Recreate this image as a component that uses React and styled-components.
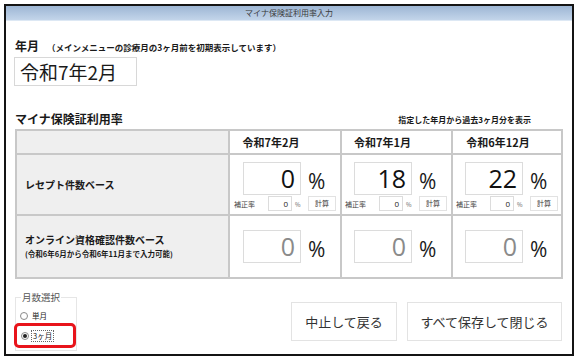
import styled, { createGlobalStyle } from 'styled-components';

const GlobalStyle = createGlobalStyle`
    html, body {
        margin: 0;
        padding: 0;
        background: #ffffff;
    }
    body {
        font-family: "Noto Sans CJK JP", "Noto Sans", sans-serif;
        color: #1a1a1a;
    }
`;

const Frame = styled.div`
    box-sizing: border-box;
    margin: 4px 0 0 4px;
    width: 570px;
    height: 352px;
    border: 2px solid #141414;
    display: flex;
    flex-direction: column;
`;

const TitleBar = styled.div`
    height: 14px;
    background: linear-gradient(#9db6d4, #c3d5ea);
    border-bottom: 1px solid #dde8f4;
    font-size: 8px;
    line-height: 14px;
    color: #3a3a3a;
    text-align: center;
`;

const Body = styled.div`
    padding: 0 9px 0 9px;
    display: flex;
    flex-direction: column;
`;

const YearLabel = styled.div`
    margin-top: 17px;
    font-size: 12px;
    font-weight: 700;
    line-height: 16px;
    display: flex;
    align-items: baseline;
`;

const Note = styled.span`
    font-size: 8.5px;
    font-weight: 700;
    margin-left: 8px;
`;

const DateBox = styled.div`
    box-sizing: border-box;
    margin: 2px 0 0 -1px;
    width: 123px;
    height: 29px;
    border: 1px solid #d8d8d8;
    font-size: 19px;
    line-height: 27px;
    padding-left: 5px;
`;

const SectionHead = styled.div`
    margin: 24px 0 3px;
    display: flex;
    justify-content: space-between;
    align-items: flex-end;
    height: 16px;
    padding-right: 32px;
`;

const SectionTitle = styled.div`
    font-size: 12px;
    font-weight: 700;
    line-height: 14px;
`;

const SectionNote = styled.div`
    font-size: 8px;
    font-weight: 700;
    line-height: 12px;
`;

const Table = styled.div`
    display: grid;
    grid-template-columns: 211px 110px 109px 108px;
    grid-template-rows: 22px 59px 61px;
    gap: 2px;
    border: 2px solid #c8c8c8;
    background: #c8c8c8;
    width: 548px;
    box-sizing: border-box;
`;

const LabelCell = styled.div`
    background: #efefef;
    padding-left: 8px;
    display: flex;
    flex-direction: column;
    justify-content: center;
    font-weight: 700;
    font-size: 10px;
    line-height: 15px;
`;

const SubLabel = styled.div`
    font-size: 7.5px;
    line-height: 14px;
`;

const HeadCell = styled.div`
    background: #ffffff;
    font-size: 11px;
    font-weight: 700;
    display: flex;
    align-items: center;
    justify-content: center;
    padding-right: ${(p) => p.shift}px;
`;

const ValueCell = styled.div`
    background: #ffffff;
    display: flex;
    flex-direction: column;
    padding: ${(p) => (p.center ? '0' : '7px')} 0 0 ${(p) => p.left}px;
    justify-content: ${(p) => (p.center ? 'center' : 'flex-start')};
`;

const ValueRow = styled.div`
    display: flex;
    align-items: center;
    margin-left: 9px;
`;

const BigInput = styled.div`
    box-sizing: border-box;
    width: 58px;
    height: 33px;
    border: 1px solid #dcdcdc;
    font-family: "Open Sans", "Noto Sans", sans-serif;
    font-size: 25px;
    line-height: 31px;
    text-align: right;
    padding-right: 5px;
    color: ${(p) => (p.disabled ? '#8a8a8a' : '#111111')};
`;

const Percent = styled.span`
    font-family: "Open Sans", "Noto Sans", sans-serif;
    font-size: 21px;
    margin-left: 7px;
    line-height: 24px;
    padding-top: 4px;
`;

const SubRow = styled.div`
    display: flex;
    align-items: center;
    height: 15px;
    margin-top: 1px;
`;

const SubText = styled.span`
    font-size: 7px;
    color: #444;
    width: 34px;
`;

const SmallInput = styled.div`
    box-sizing: border-box;
    width: 24px;
    height: 15px;
    border: 1px solid #dcdcdc;
    font-family: "Open Sans", sans-serif;
    font-size: 8px;
    line-height: 13px;
    text-align: right;
    padding-right: 3px;
`;

const TinyPercent = styled.span`
    font-size: 6px;
    color: #666;
    margin: 2px 0 0 3px;
    width: 13px;
`;

const CalcButton = styled.div`
    box-sizing: border-box;
    width: 28px;
    height: 15px;
    border: 1px solid #e2e2e2;
    font-size: 7px;
    line-height: 13px;
    text-align: center;
    color: #333;
`;

const BottomRow = styled.div`
    margin-top: 16px;
    display: flex;
    justify-content: space-between;
    align-items: flex-start;
    width: 548px;
`;

const GroupBox = styled.fieldset`
    margin: -4px 0 0 0;
    padding: 0 0 2px 4px;
    width: 57px;
    box-sizing: border-box;
    border: 1px solid #e6e6e6;
`;

const Legend = styled.legend`
    font-size: 9.5px;
    color: #555;
    padding: 0 1px;
    margin-left: 1px;
    line-height: 12px;
`;

const RadioRow = styled.div`
    display: flex;
    align-items: center;
    font-size: 7.5px;
    height: ${(p) => (p.marked ? 25 : 14)}px;
    box-sizing: border-box;
    margin: ${(p) => (p.marked ? '0 0 0 -6px' : '6px 0 0 0')};
    width: ${(p) => (p.marked ? 62 : 50)}px;
    padding-left: ${(p) => (p.marked ? 4 : 0)}px;
    border: ${(p) => (p.marked ? '3px solid #e8141b' : 'none')};
    border-radius: 5px;
`;

const RadioDot = styled.span`
    box-sizing: border-box;
    width: 8px;
    height: 8px;
    border-radius: 50%;
    border: 1px solid #8a8a8a;
    background: #fff;
    margin-right: 2px;
    display: flex;
    align-items: center;
    justify-content: center;
    &::after {
        content: '';
        width: 4px;
        height: 4px;
        border-radius: 50%;
        background: ${(p) => (p.checked ? '#222' : 'transparent')};
    }
`;

const RadioText = styled.span`
    padding: 0 1px;
    border: 1px dotted ${(p) => (p.focused ? '#666' : 'transparent')};
    line-height: 10px;
`;

const Buttons = styled.div`
    display: flex;
    gap: 10px;
    margin-top: 7px;
    margin-right: 1px;
`;

const ActionButton = styled.div`
    box-sizing: border-box;
    width: ${(p) => p.w}px;
    height: 39px;
    border: 1px solid #e3e3e3;
    font-size: 13px;
    line-height: 37px;
    text-align: center;
    color: #333;
`;

const months = [
    { label: '令和7年2月', value: '0', left: 4, shift: 28 },
    { label: '令和7年1月', value: '18', left: 3, shift: 28 },
    { label: '令和6年12月', value: '22', left: 3, shift: 18 },
];

const App = () => {
    return (
        <>
            <GlobalStyle />
            <Frame>
                <TitleBar>マイナ保険証利用率入力</TitleBar>
                <Body>
                    <YearLabel>
                        年月<Note>（メインメニューの診療月の3ヶ月前を初期表示しています）</Note>
                    </YearLabel>
                    <DateBox>令和7年2月</DateBox>

                    <SectionHead>
                        <SectionTitle>マイナ保険証利用率</SectionTitle>
                        <SectionNote>指定した年月から過去3ヶ月分を表示</SectionNote>
                    </SectionHead>

                    <Table>
                        <LabelCell />
                        {months.map((m, i) => (
                            <HeadCell key={'h' + i} shift={m.shift}>{m.label}</HeadCell>
                        ))}

                        <LabelCell>レセプト件数ベース</LabelCell>
                        {months.map((m, i) => (
                            <ValueCell key={'r' + i} left={m.left}>
                                <ValueRow>
                                    <BigInput>{m.value}</BigInput>
                                    <Percent>%</Percent>
                                </ValueRow>
                                <SubRow>
                                    <SubText>補正率</SubText>
                                    <SmallInput>0</SmallInput>
                                    <TinyPercent>%</TinyPercent>
                                    <CalcButton>計算</CalcButton>
                                </SubRow>
                            </ValueCell>
                        ))}

                        <LabelCell>
                            <div>オンライン資格確認件数ベース</div>
                            <SubLabel>(令和6年6月から令和6年11月まで入力可能)</SubLabel>
                        </LabelCell>
                        {months.map((m, i) => (
                            <ValueCell key={'o' + i} left={m.left} center>
                                <ValueRow>
                                    <BigInput disabled>0</BigInput>
                                    <Percent>%</Percent>
                                </ValueRow>
                            </ValueCell>
                        ))}
                    </Table>

                    <BottomRow>
                        <GroupBox>
                            <Legend>月数選択</Legend>
                            <RadioRow>
                                <RadioDot />
                                <RadioText>単月</RadioText>
                            </RadioRow>
                            <RadioRow marked>
                                <RadioDot checked />
                                <RadioText focused>3ヶ月</RadioText>
                            </RadioRow>
                        </GroupBox>
                        <Buttons>
                            <ActionButton w={106}>中止して戻る</ActionButton>
                            <ActionButton w={155}>すべて保存して閉じる</ActionButton>
                        </Buttons>
                    </BottomRow>
                </Body>
            </Frame>
        </>
    );
};

export default App;
